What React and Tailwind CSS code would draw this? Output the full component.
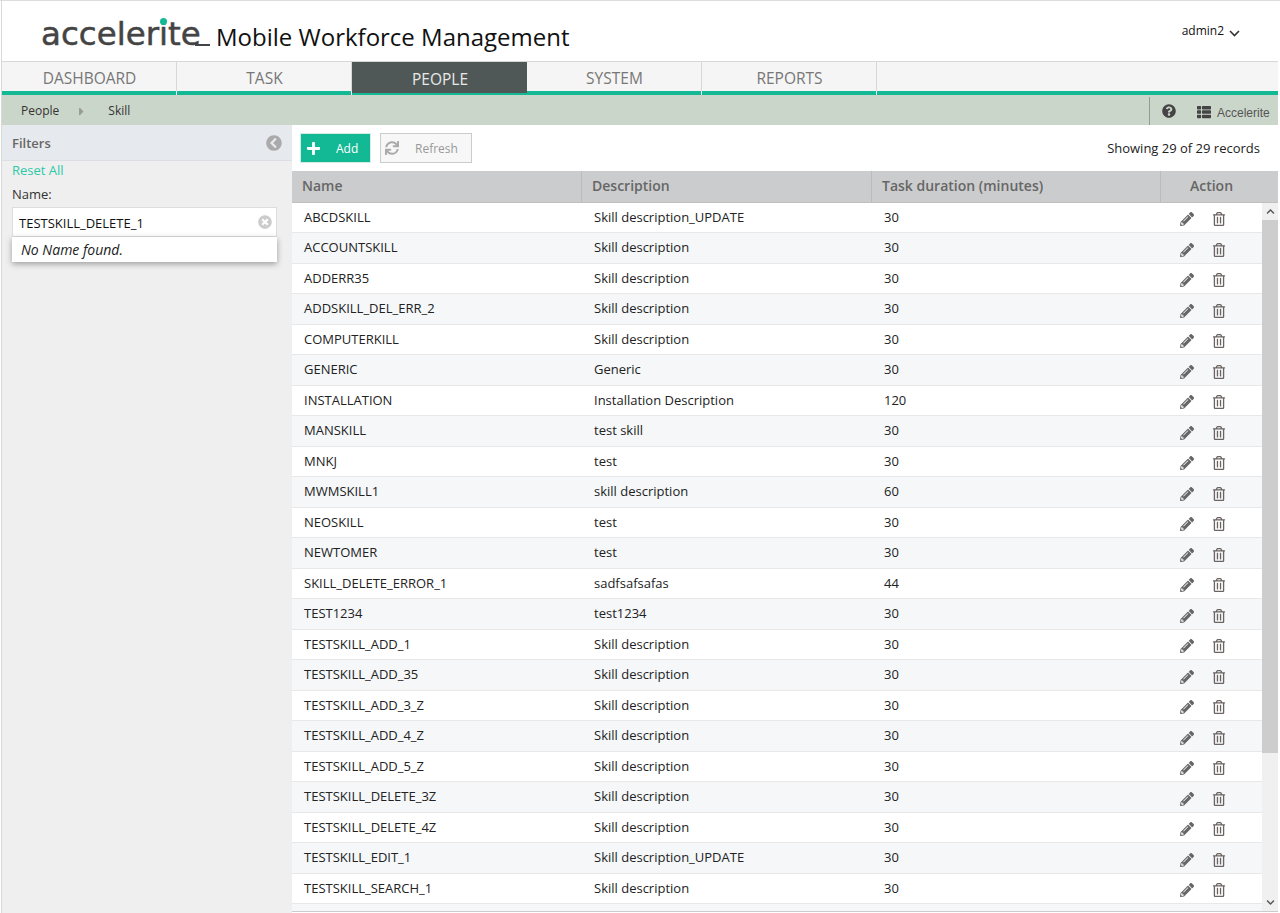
import { FaPencilAlt, FaRegTrashAlt, FaQuestionCircle, FaThList, FaPlus, FaSync, FaChevronCircleLeft, FaTimesCircle, FaChevronUp, FaChevronDown, FaCaretRight } from 'react-icons/fa';

const tabs = ['DASHBOARD', 'TASK', 'PEOPLE', 'SYSTEM', 'REPORTS'];

const rows = [
  ['ABCDSKILL', 'Skill description_UPDATE', '30'],
  ['ACCOUNTSKILL', 'Skill description', '30'],
  ['ADDERR35', 'Skill description', '30'],
  ['ADDSKILL_DEL_ERR_2', 'Skill description', '30'],
  ['COMPUTERKILL', 'Skill description', '30'],
  ['GENERIC', 'Generic', '30'],
  ['INSTALLATION', 'Installation Description', '120'],
  ['MANSKILL', 'test skill', '30'],
  ['MNKJ', 'test', '30'],
  ['MWMSKILL1', 'skill description', '60'],
  ['NEOSKILL', 'test', '30'],
  ['NEWTOMER', 'test', '30'],
  ['SKILL_DELETE_ERROR_1', 'sadfsafsafas', '44'],
  ['TEST1234', 'test1234', '30'],
  ['TESTSKILL_ADD_1', 'Skill description', '30'],
  ['TESTSKILL_ADD_35', 'Skill description', '30'],
  ['TESTSKILL_ADD_3_Z', 'Skill description', '30'],
  ['TESTSKILL_ADD_4_Z', 'Skill description', '30'],
  ['TESTSKILL_ADD_5_Z', 'Skill description', '30'],
  ['TESTSKILL_DELETE_3Z', 'Skill description', '30'],
  ['TESTSKILL_DELETE_4Z', 'Skill description', '30'],
  ['TESTSKILL_EDIT_1', 'Skill description_UPDATE', '30'],
  ['TESTSKILL_SEARCH_1', 'Skill description', '30'],
];

function Logo() {
  return (
    <div className="relative w-[170px] h-[40px] shrink-0">
      <span className="font-['DejaVu_Sans','sans-serif'] text-[32.5px] leading-[40px] text-[#444] [-webkit-text-stroke:0.5px_#444]">accelerite</span>
      {/* teal dot over the i, tail under the e */}
      <span className="absolute left-[119px] top-[4px] w-[7px] h-[7px] rounded-full bg-[#13b894]" />
      <span className="absolute left-[154px] top-[30px] w-[15px] h-[2px] bg-[#444]" />
    </div>
  );
}

export default function App() {
  return (
    <div className="h-[913px] w-[1280px] overflow-hidden bg-white font-['Open_Sans','sans-serif'] text-[13px] text-[#222] border-t border-t-[#ddd] pl-px pr-[2px]">
      <div className="h-full border-l border-l-[#d8d8d8]">
        <header className="h-[60px] flex relative">
          <div className="flex items-end pl-[39px] pb-[7px]">
            <Logo />
            <span className="ml-[5px] text-[24px] leading-[34px] text-[#111]">Mobile Workforce Management</span>
          </div>
          <div className="ml-auto mr-[38px] mt-[22px] flex items-start gap-[5px] text-[12px] leading-[16px] text-[#111]">
            admin2
            <svg width="11" height="7" viewBox="0 0 11 7" className="mt-[7px]" fill="none" stroke="#333" strokeWidth="1.6"><path d="M1 1l4.5 4.5L10 1" /></svg>
          </div>
        </header>

        <nav className="h-[34px] flex bg-[#f5f5f5] border-t border-t-[#d8d8d8]">
          {tabs.map((t) => (
            <div
              key={t}
              className={`relative w-[175px] flex items-center justify-center pt-[4px] pl-px text-[15.5px] border-b-[#13b894] ${t === 'PEOPLE' ? 'bg-[#505857] text-[#e8e8e8] border-b-[2px]' : 'text-[#777] border-b-[4px] border-r border-r-[#d8d8d8]'}`}
            >
              {t}
              {t !== 'PEOPLE' && <span className="absolute right-[-1px] bottom-[-4px] w-px h-[4px] bg-white" />}
            </div>
          ))}
          <div className="flex-1 border-b-[4px] border-b-[#13b894]" />
        </nav>

        <div className="h-[30px] flex items-center bg-[#cbd6ca] text-[12px] text-[#333]">
          <span className="ml-[19px] pt-[2px]">People</span>
          <FaCaretRight className="ml-[16px] mt-[2px] text-[#999] text-[13px]" />
          <span className="ml-[20px] pt-[2px]">Skill</span>
          <div className="ml-auto h-[28px] flex items-center border-l border-l-[#999] w-[129px] mt-[2px]">
            <FaQuestionCircle className="ml-[12px] text-[14px] text-[#444]" />
            <FaThList className="ml-[21px] mt-[2px] text-[14px] text-[#444]" />
            <span className="ml-[6px] mt-[3px] font-['Liberation_Sans','sans-serif'] text-[12px] text-[#555]">Accelerite</span>
          </div>
        </div>

        <div className="flex h-[788px]">
          <aside className="w-[290px] shrink-0 bg-[#efefef]">
            <div className="h-[36px] flex items-center justify-between pl-[10px] pr-[10px] bg-[#e6e9ed] border-b border-b-[#dcdfe3]">
              <span className="pt-[2px] font-semibold text-[#666]">Filters</span>
              <FaChevronCircleLeft className="text-[16px] text-[#aaa]" />
            </div>
            <div className="px-[10px]">
              <div className="leading-[18px] text-[#2cc9a6]">Reset All</div>
              <div className="mt-[6px] leading-[18px] text-[#333]">Name:</div>
              <div className="relative mt-[4px] w-[265px]">
                <div className="h-[30px] flex items-center justify-between pl-[6px] pr-[4px] bg-white border border-[#ddd]">
                  <span className="pt-[3px] text-[#111]">TESTSKILL_DELETE_1</span>
                  <FaTimesCircle className="text-[14px] text-[#ccc]" />
                </div>
                <div className="absolute top-[30px] left-0 w-full h-[25px] flex items-center pl-[9px] bg-white italic text-[14px] text-[#222] shadow-[0_2px_6px_rgba(0,0,0,0.35)]">
                  No Name found.
                </div>
              </div>
            </div>
          </aside>

          <main className="flex-1 min-w-0">
            <div className="h-[46px] flex items-center pl-[8px] pr-[18px]">
              <button className="w-[71px] h-[30px] flex items-center bg-[#13b894] border border-[#d5ece6] text-[12px] text-white pl-[5px]">
                <FaPlus className="text-[15px]" />
                <span className="ml-[15px] pt-[1px]">Add</span>
              </button>
              <button className="ml-[9px] w-[92px] h-[30px] flex items-center bg-[#f7f7f7] border border-[#ccc] text-[12px] text-[#999] pl-[4px]">
                <FaSync className="text-[14px] text-[#aaa]" />
                <span className="ml-[16px] pt-[1px]">Refresh</span>
              </button>
              <span className="ml-auto pt-[2px] text-[#222]">Showing 29 of 29 records</span>
            </div>

            <div className="h-[31.5px] flex items-center bg-[#cbcccd] font-semibold text-[14px] text-[#666] border-b border-b-[#c0c0c0]">
              <div className="w-[290px] h-full flex items-center pl-[10px] pb-[1px] border-r border-r-[#bbb]">Name</div>
              <div className="w-[290px] h-full flex items-center pl-[10px] pb-[1px] border-r border-r-[#bbb]">Description</div>
              <div className="w-[289px] h-full flex items-center pl-[10px] pb-[1px] border-r border-r-[#bbb]">Task duration (minutes)</div>
              <div className="w-[101px] pb-[1px] text-center">Action</div>
            </div>

            <div className="flex h-[709.5px] border-b border-b-[#ccc]">
              <div className="flex-1 overflow-hidden">
                {rows.map((r, i) => (
                  <div key={r[0]} className={`h-[30.5px] flex items-center border-b border-b-[#e8e8e8] text-[#222] ${i % 2 ? 'bg-[#f5f7f9]' : 'bg-white'}`}>
                    <div className="w-[290px] pl-[12px] truncate">{r[0]}</div>
                    <div className="w-[290px] pl-[12px]">{r[1]}</div>
                    <div className="w-[288px] pl-[12px]">{r[2]}</div>
                    <div className="flex items-center pt-[4px]">
                      <FaPencilAlt className="ml-[20px] text-[14px] text-[#666]" />
                      <FaRegTrashAlt className="ml-[18px] text-[14px] text-[#6b6462]" />
                    </div>
                  </div>
                ))}
                <div className="h-[30.5px] bg-[#f5f7f9]" />
              </div>
              <div className="w-[16px] shrink-0 flex flex-col bg-[#f0f0f0]">
                <div className="h-[17px] flex items-center justify-center">
                  <FaChevronUp className="text-[9px] text-[#555]" />
                </div>
                <div className="h-[533px] bg-[#cdcdcd]" />
                <div className="mt-auto h-[17px] flex items-center justify-center">
                  <FaChevronDown className="text-[9px] text-[#555]" />
                </div>
              </div>
            </div>
          </main>
        </div>
      </div>
    </div>
  );
}
